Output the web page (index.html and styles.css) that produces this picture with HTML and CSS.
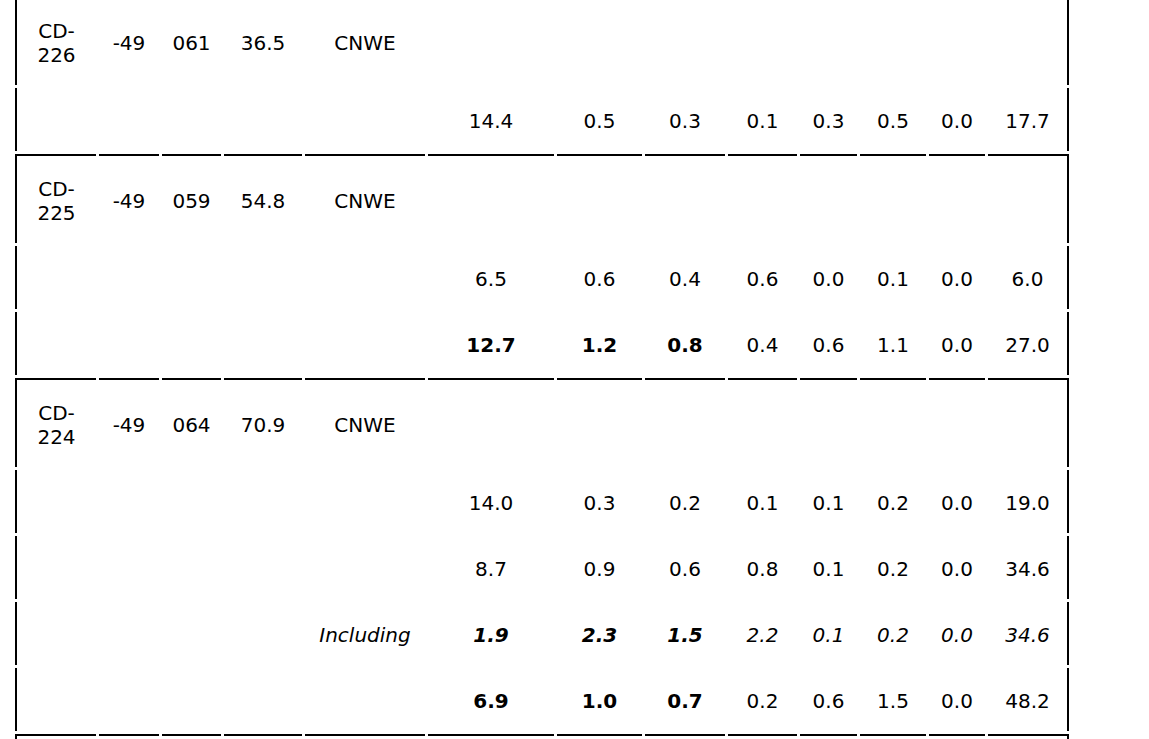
FILE: index.html
```html
<!DOCTYPE html>
<html lang="en">
<head>
<meta charset="utf-8">
<title>Drill results</title>
<link rel="stylesheet" href="styles.css">
</head>
<body>
<div class="page">
<table class="results">
  <colgroup>
    <col class="c1"><col class="c2"><col class="c3"><col class="c4"><col class="c5">
    <col class="c6"><col class="c7"><col class="c8"><col class="c9"><col class="c10">
    <col class="c11"><col class="c12"><col class="c13">
  </colgroup>
  <tbody>
    <tr class="grp">
      <td class="first">CD-<br>226</td><td>-49</td><td>061</td><td>36.5</td><td>CNWE</td>
      <td></td><td></td><td></td><td></td><td></td><td></td><td></td><td class="last"></td>
    </tr>
    <tr>
      <td class="first"></td><td></td><td></td><td></td><td></td>
      <td>14.4</td><td>0.5</td><td>0.3</td><td>0.1</td><td>0.3</td><td>0.5</td><td>0.0</td><td class="last">17.7</td>
    </tr>

    <tr class="grp">
      <td class="first">CD-<br>225</td><td>-49</td><td>059</td><td>54.8</td><td>CNWE</td>
      <td></td><td></td><td></td><td></td><td></td><td></td><td></td><td class="last"></td>
    </tr>
    <tr>
      <td class="first"></td><td></td><td></td><td></td><td></td>
      <td>6.5</td><td>0.6</td><td>0.4</td><td>0.6</td><td>0.0</td><td>0.1</td><td>0.0</td><td class="last">6.0</td>
    </tr>
    <tr>
      <td class="first"></td><td></td><td></td><td></td><td></td>
      <td class="b">12.7</td><td class="b">1.2</td><td class="b">0.8</td><td>0.4</td><td>0.6</td><td>1.1</td><td>0.0</td><td class="last">27.0</td>
    </tr>

    <tr class="grp">
      <td class="first">CD-<br>224</td><td>-49</td><td>064</td><td>70.9</td><td>CNWE</td>
      <td></td><td></td><td></td><td></td><td></td><td></td><td></td><td class="last"></td>
    </tr>
    <tr>
      <td class="first"></td><td></td><td></td><td></td><td></td>
      <td>14.0</td><td>0.3</td><td>0.2</td><td>0.1</td><td>0.1</td><td>0.2</td><td>0.0</td><td class="last">19.0</td>
    </tr>
    <tr>
      <td class="first"></td><td></td><td></td><td></td><td></td>
      <td>8.7</td><td>0.9</td><td>0.6</td><td>0.8</td><td>0.1</td><td>0.2</td><td>0.0</td><td class="last">34.6</td>
    </tr>
    <tr class="sub">
      <td class="first"></td><td></td><td></td><td></td><td>Including</td>
      <td class="b">1.9</td><td class="b">2.3</td><td class="b">1.5</td><td>2.2</td><td>0.1</td><td>0.2</td><td>0.0</td><td class="last">34.6</td>
    </tr>
    <tr>
      <td class="first"></td><td></td><td></td><td></td><td></td>
      <td class="b">6.9</td><td class="b">1.0</td><td class="b">0.7</td><td>0.2</td><td>0.6</td><td>1.5</td><td>0.0</td><td class="last">48.2</td>
    </tr>

    <tr class="grp">
      <td class="first"></td><td></td><td></td><td></td><td></td>
      <td></td><td></td><td></td><td></td><td></td><td></td><td></td><td class="last"></td>
    </tr>
  </tbody>
</table>
</div>
</body>
</html>
```
FILE: styles.css
```css
html, body {
  margin: 0;
  padding: 0;
  background: #fff;
  overflow: hidden;
}

.page {
  padding-left: 12px;
}

.results {
  margin-top: -7px;
  table-layout: fixed;
  width: 1060px;
  border-collapse: separate;
  border-spacing: 3px;
  font-family: "DejaVu Sans", Verdana, sans-serif;
  font-size: 20px;
  line-height: 24px;
  color: #000;
}

.c1 { width: 81px; }
.c2 { width: 60px; }
.c3 { width: 59px; }
.c4 { width: 78px; }
.c5 { width: 120px; }
.c6 { width: 126px; }
.c7 { width: 85px; }
.c8 { width: 80px; }
.c9 { width: 69px; }
.c10 { width: 57px; }
.c11 { width: 66px; }
.c12 { width: 56px; }
.c13 { width: 81px; }

.results td {
  box-sizing: border-box;
  height: 63px;
  padding: 2px 0 0 0;
  text-align: center;
  vertical-align: middle;
  white-space: nowrap;
}

.results .grp td {
  height: 89px;
  border-top: 2px solid #000;
}

.results td.first {
  border-left: 2px solid #000;
}

.results td.last {
  border-right: 2px solid #000;
}

.results td.b {
  font-weight: bold;
}

.results .sub td {
  font-style: italic;
}
```
